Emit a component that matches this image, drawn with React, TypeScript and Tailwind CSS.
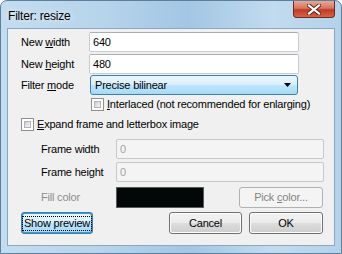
import React from "react";

const font = { fontFamily: '"Liberation Sans", Arial, sans-serif' };

function TextBox({ value, w, disabled }: { value: string; w: string; disabled?: boolean }) {
  return (
    <div
      className={`${w} h-[20px] flex items-center px-[3px] border rounded-[2px] ${
        disabled
          ? "bg-[#f4f4f4] border-[#c8c8c8] text-[#a3a3a3]"
          : "bg-white border-[#c6cbd2] border-t-[#abadb3] text-black"
      }`}
    >
      {value}
    </div>
  );
}

function CheckBox() {
  return (
    <div className="w-[13px] h-[13px] shrink-0 border border-[#8e8f8f] bg-white p-[2px]">
      <div className="w-full h-full bg-[linear-gradient(135deg,#cbcfd5,#f6f6f6)] border border-[#b0b4b9]" />
    </div>
  );
}

function Button({ children, w, variant }: { children: React.ReactNode; w: string; variant?: "focus" | "disabled" }) {
  if (variant === "focus") {
    return (
      <div className={`${w} h-[22px] rounded-[3px] border border-[#3c7fb1] p-[1px] bg-[#3c9ccf]`}>
        <div className="h-full rounded-[2px] bg-[linear-gradient(#eaf6fd_0%,#d9f0fc_50%,#bee6fd_51%,#a7d9f5_100%)] flex items-center justify-center">
          <span className="border border-dotted border-black leading-[13px] px-[1px]">{children}</span>
        </div>
      </div>
    );
  }
  if (variant === "disabled") {
    return (
      <div className={`${w} h-[21px] rounded-[3px] border border-[#adb2b5] bg-[#f4f4f4] flex items-center justify-center text-[#838383]`}>
        <span>{children}</span>
      </div>
    );
  }
  return (
    <div className={`${w} h-[22px] rounded-[3px] border border-[#707070] p-[1px] bg-[#fcfcfc]`}>
      <div className="h-full rounded-[2px] bg-[linear-gradient(#f2f2f2_0%,#ebebeb_50%,#dddddd_51%,#cfcfcf_100%)] flex items-center justify-center">
        <span>{children}</span>
      </div>
    </div>
  );
}

export default function App() {
  return (
    <div
      style={font}
      className="w-[342px] h-[254px] flex flex-col rounded-t-[7px] border border-[#5e7e9e] bg-[linear-gradient(90deg,#c4dcef_0%,#b7d4eb_30%,#a2c6e4_55%,#c2dbee_80%,#b3d2ea_100%)] text-[11px] tracking-[-0.2px] whitespace-nowrap text-black overflow-hidden"
    >
      <div className="h-[27px] flex justify-between items-start">
        <div className="pl-[7px] pt-[6px] text-[12px] [text-shadow:0_0_6px_#ffffff]">Filter: resize</div>
        <div className="mr-[6px] w-[42px] h-[17px] rounded-b-[4px] border border-t-0 border-[#6b2b22] bg-[linear-gradient(#e7a898_0%,#d9755f_45%,#c13a23_55%,#d8634a_100%)] flex items-center justify-center">
          <svg width="14" height="11" viewBox="0 0 14 11">
            <path d="M2 1.5 L12 9.5 M12 1.5 L2 9.5" stroke="#5a2418" strokeWidth="4" strokeLinecap="square" />
            <path d="M2 1.5 L12 9.5 M12 1.5 L2 9.5" stroke="#ffffff" strokeWidth="2.2" strokeLinecap="square" />
          </svg>
        </div>
      </div>
      <div className="mx-[6px] mb-[7px] flex-1 border border-[#8ba6c0] bg-[#f0f0f0] flex flex-col pt-[3px]">
        <div className="flex items-center h-[20px]">
          <div className="w-[81px] pl-[13px]">
            New <u>w</u>idth
          </div>
          <TextBox value="640" w="w-[210px]" />
        </div>
        <div className="flex items-center h-[20px] mt-[2px]">
          <div className="w-[81px] pl-[13px]">
            New <u>h</u>eight
          </div>
          <TextBox value="480" w="w-[210px]" />
        </div>
        <div className="flex items-center h-[20px] mt-[1px]">
          <div className="w-[82px] pl-[13px]">
            Filter <u>m</u>ode
          </div>
          <div className="w-[208px] h-[20px] rounded-[3px] border border-[#3c7fb1] bg-[linear-gradient(#eaf6fd_0%,#d9f0fc_50%,#bee6fd_51%,#a7d9f5_100%)] flex items-center justify-between pl-[4px] pr-[6px]">
            <span>Precise bilinear</span>
            <svg width="7" height="4" viewBox="0 0 7 4">
              <path d="M0 0 H7 L3.5 4 Z" fill="#000" />
            </svg>
          </div>
        </div>
        <div className="flex items-center h-[13px] mt-[3px] pl-[83px] gap-[3px]">
          <CheckBox />
          <span>
            <u>I</u>nterlaced (not recommended for enlarging)
          </span>
        </div>
        <div className="flex items-center h-[13px] mt-[7px] pl-[13px] gap-[3px]">
          <CheckBox />
          <span>
            <u>E</u>xpand frame and letterbox image
          </span>
        </div>
        <div className="flex items-center h-[20px] mt-[8px]">
          <div className="w-[108px] pl-[33px]">Frame width</div>
          <TextBox value="0" w="w-[208px]" disabled />
        </div>
        <div className="flex items-center h-[20px] mt-[3px]">
          <div className="w-[108px] pl-[33px]">Frame height</div>
          <TextBox value="0" w="w-[208px]" disabled />
        </div>
        <div className="flex items-center h-[21px] mt-[5px]">
          <div className="w-[108px] pl-[33px] text-[#8d8d8d]">Fill color</div>
          <div className="w-[88px] h-[21px] bg-[#020808] border border-[#5a5a5a]" />
          <div className="ml-[35px]">
            <Button w="w-[84px]" variant="disabled">
              Pick <u>c</u>olor...
            </Button>
          </div>
        </div>
        <div className="flex items-center h-[22px] mt-[4px] pl-[13px]">
          <Button w="w-[72px]" variant="focus">
            Show preview
          </Button>
          <div className="ml-[76px]">
            <Button w="w-[73px]">Cancel</Button>
          </div>
          <div className="ml-[7px]">
            <Button w="w-[74px]">OK</Button>
          </div>
        </div>
      </div>
    </div>
  );
}
